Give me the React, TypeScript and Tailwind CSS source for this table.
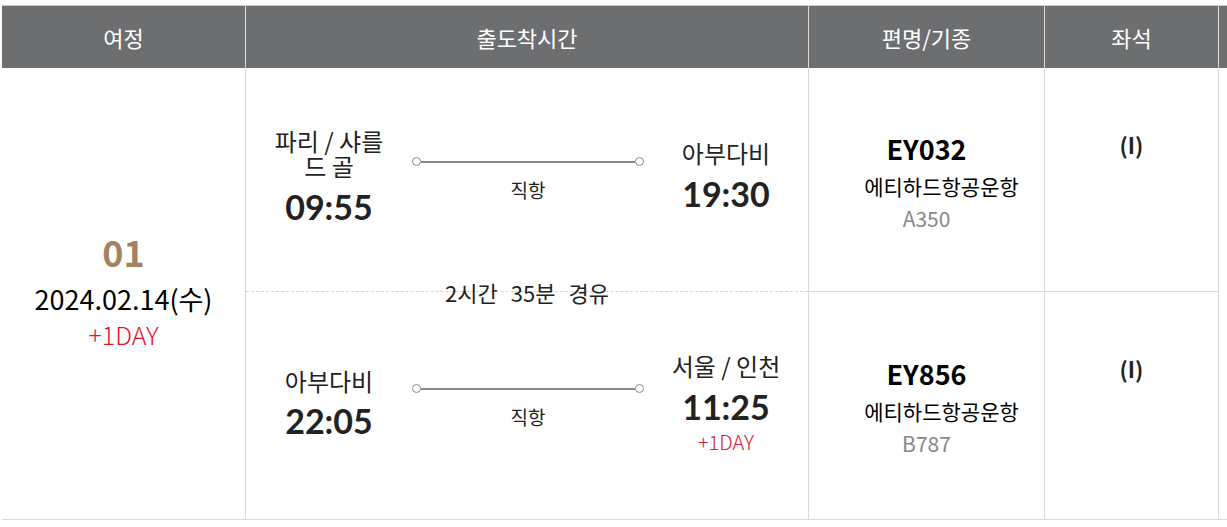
const legs = [
  {
    from: '파리 / 샤를 드 골',
    dep: '09:55',
    to: '아부다비',
    arr: '19:30',
    arrNext: false,
    flight: 'EY032',
    airline: '에티하드항공운항',
    aircraft: 'A350',
    seat: '(I)',
  },
  {
    from: '아부다비',
    dep: '22:05',
    to: '서울 / 인천',
    arr: '11:25',
    arrNext: true,
    flight: 'EY856',
    airline: '에티하드항공운항',
    aircraft: 'B787',
    seat: '(I)',
  },
];

function RouteLine() {
  return (
    <div className="flex flex-col items-center w-[232px] mt-[5px]">
      <div className="flex items-center w-full">
        <span className="h-[9px] w-[9px] rounded-full border-[1.5px] border-[#8a8a8a] bg-white" />
        <span className="flex-1 h-[2px] bg-[#8a8a8a]" />
        <span className="h-[9px] w-[9px] rounded-full border-[1.5px] border-[#8a8a8a] bg-white" />
      </div>
      <span className="mt-[14px] text-[19px] leading-none text-[#222]">직항</span>
    </div>
  );
}

export default function App() {
  return (
    <div className="w-[1227px] h-[527px] overflow-hidden bg-white pl-[2px] pt-[5px] font-['Noto_Sans_CJK_KR',sans-serif] text-[#111]">
      <div className="w-[1260px] border-t border-[#c8c8c8]">
        {/* header */}
        <div className="flex h-[62px] bg-[#6d6e70] text-white text-[22px]">
          <div className="w-[244px] border-r border-[#d9d9d9] flex items-center justify-center">여정</div>
          <div className="w-[563px] border-r border-[#d9d9d9] flex items-center justify-center">출도착시간</div>
          <div className="w-[236px] border-r border-[#d9d9d9] flex items-center justify-center">편명/기종</div>
          <div className="w-[174px] border-r border-[#d9d9d9] flex items-center justify-center">좌석</div>
          <div className="flex-1" />
        </div>

        {/* body */}
        <div className="flex border-b border-[#d9d9d9]">
          <div className="w-[244px] border-r border-[#d9d9d9] flex flex-col items-center justify-center pb-[8px]">
            <span className="text-[36px] font-bold leading-none text-[#a5825f]">01</span>
            <span className="mt-[16px] text-[27px] leading-none text-black">2024.02.14(수)</span>
            <span className="mt-[10px] text-[25px] leading-none text-[#e0142c] font-light">+1DAY</span>
          </div>

          <div className="flex flex-col">
            {legs.map((leg, i) => (
              <div key={leg.flight} className={i === 0 ? 'flex h-[224px]' : 'flex h-[227px]'}>
                <div className="relative w-[563px] border-r border-[#d9d9d9]">
                  <div
                    className={
                      i === 0
                        ? 'flex items-center h-full pl-[23px] pb-[8px] border-b border-dashed border-[#d4d4d4]'
                        : 'flex items-center h-full pl-[23px] pb-[6px]'
                    }
                  >
                    <div className="w-[120px] flex flex-col items-center text-center">
                      <span className="text-[24px] leading-[25px] text-[#222]">{leg.from}</span>
                      <span
                        className={
                          i === 0
                            ? "mt-[12px] font-['Lato',sans-serif] font-bold text-[34px] leading-none text-[#222]"
                            : "mt-[11px] font-['Lato',sans-serif] font-bold text-[34px] leading-none text-[#222]"
                        }
                      >
                        {leg.dep}
                      </span>
                    </div>
                    <div className="ml-[23px]">
                      <RouteLine />
                    </div>
                    <div className="ml-[17px] w-[130px] flex flex-col items-center text-center">
                      <span className="text-[24px] leading-[25px] text-[#222]">{leg.to}</span>
                      <span className="mt-[12px] font-['Lato',sans-serif] font-bold text-[34px] leading-none text-[#222]">
                        {leg.arr}
                      </span>
                      {leg.arrNext && (
                        <span className="mt-[8px] text-[20px] leading-[20px] font-light text-[#e0142c]">+1DAY</span>
                      )}
                    </div>
                  </div>
                  {i === 0 && (
                    <div className="absolute left-0 right-0 -bottom-[11px] text-center text-[22px] leading-none text-[#222]">
                      2시간<span className="ml-[13px]">35분</span>
                      <span className="ml-[13px]">경유</span>
                    </div>
                  )}
                </div>

                <div
                  className={
                    i === 0
                      ? 'w-[236px] border-r border-b border-[#d9d9d9] flex flex-col items-center pt-[67px]'
                      : 'w-[236px] border-r border-[#d9d9d9] flex flex-col items-center pt-[68px]'
                  }
                >
                  <span className="text-[27px] font-bold leading-none text-black">{leg.flight}</span>
                  <span className="mt-[14px] pl-[30px] text-[21px] leading-none text-black">{leg.airline}</span>
                  <span className="mt-[11px] text-[21px] leading-none text-[#888]">{leg.aircraft}</span>
                </div>

                <div
                  className={
                    i === 0
                      ? 'w-[174px] border-r border-b border-[#d9d9d9] flex justify-center pt-[65px]'
                      : 'w-[174px] border-r border-[#d9d9d9] flex justify-center pt-[65px]'
                  }
                >
                  <span className="text-[22px] font-bold leading-none text-[#222]">{leg.seat}</span>
                </div>
                <div className="flex-1" />
              </div>
            ))}
          </div>
        </div>
      </div>
    </div>
  );
}
